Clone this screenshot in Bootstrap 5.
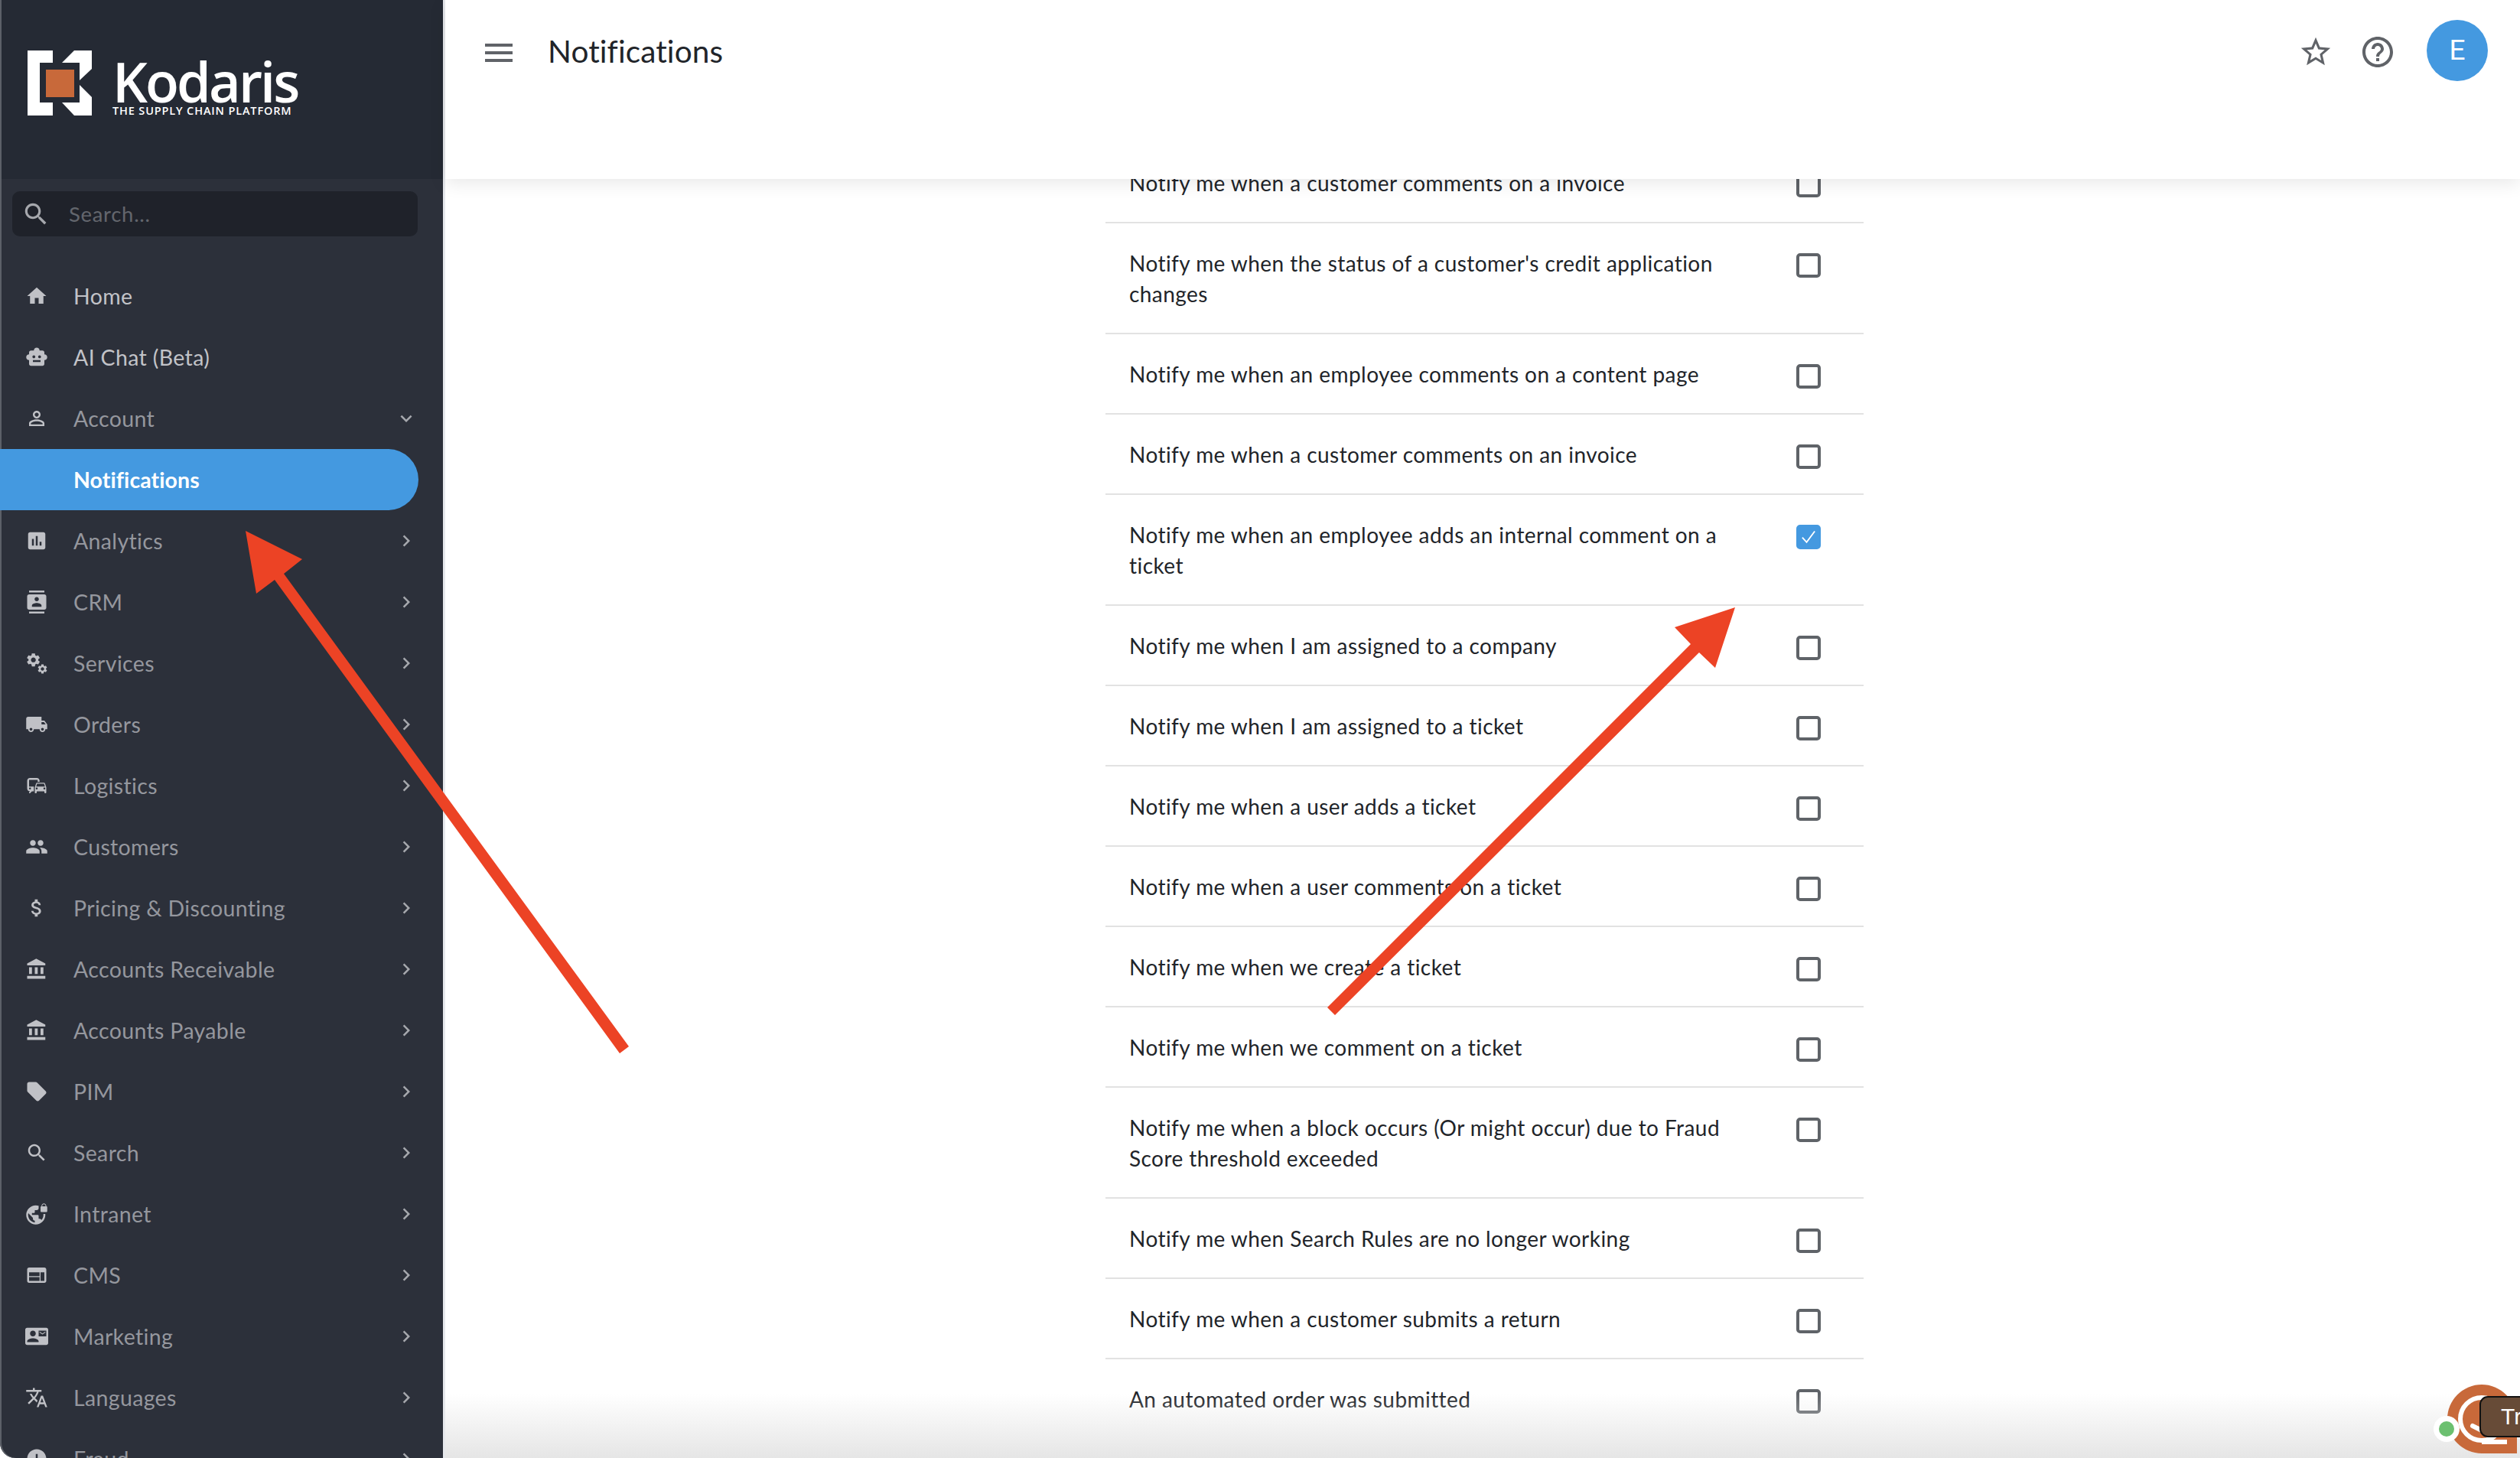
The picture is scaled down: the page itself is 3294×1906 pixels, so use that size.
<!DOCTYPE html>
<html lang="en">
<head>
<meta charset="utf-8">
<title>Notifications</title>
<link href="https://cdn.jsdelivr.net/npm/bootstrap@5.3.0/dist/css/bootstrap.min.css" rel="stylesheet">
<style>
html,body{height:100%;margin:0;overflow:hidden;background:#2a2622}
body{font-family:"Lato","Liberation Sans",sans-serif;color:#212429}
.kd-app{height:1906px;width:3294px;position:relative;overflow:hidden;background:#fff}
.kd-side{width:582px;flex:none;background:#2c303a;box-shadow:inset 2px 0 #5c6068;border-right:3px solid #e6e8ec;border-bottom-left-radius:20px;overflow:hidden}
.kd-brand{height:234px;flex:none;background:#252a34;box-shadow:inset 2px 0 #5c6068;padding-left:36px}
.kd-mark{width:84px;height:85px;flex:none;margin-top:-17px}
.kd-word{margin-left:27px;color:#fff;font-family:"Open Sans",sans-serif;line-height:1;margin-top:-6px}
.kd-word-main{font-size:72px;font-weight:600;letter-spacing:-2.9px;height:62px;line-height:62px}
.kd-word-sub{font-size:14.5px;font-weight:600;letter-spacing:.85px;white-space:nowrap;margin-top:1px}
.kd-search-wrap{padding:16px 33px 0 16px;flex:none}
.kd-search{height:59px;background:#1f222a;border-radius:10px;padding-left:16px}
.kd-search svg{width:38px;height:38px;fill:#a6a8ad;flex:none;margin-left:-4px}
.kd-search input{background:transparent;border:0;box-shadow:none;padding:0 0 0 24px;font-size:27.5px;letter-spacing:.7px;color:#ccc}
.kd-search input:focus{background:transparent;box-shadow:none}
.kd-search input::placeholder{color:#63666d;opacity:1}
.kd-nav{padding-top:38px;flex-wrap:nowrap;flex:none}
.kd-item{height:80px;flex:none;padding:0 33px 0 33px;font-size:28.5px;letter-spacing:.35px;color:#95979e;white-space:nowrap}
.kd-item:hover{color:#95979e}
.kd-ic{width:30px;height:30px;fill:#c0c1c6;flex:none;margin-right:33px}
.kd-chev{width:30px;height:30px;fill:#a6a8ad;flex:none;margin-left:auto}
.kd-item.kd-bright,.kd-item.kd-bright:hover{color:#c2c3c8}
.kd-item.kd-on,.kd-item.kd-on:hover{background:#4499e0;color:#fff;font-weight:700;padding-left:96px;width:547px;border-radius:0 40px 40px 0;letter-spacing:.08px}
.kd-main{min-width:0;position:relative}
.kd-top{height:234px;flex:none;background:#fff;padding:0;box-shadow:0 6px 22px rgba(0,0,0,.09);z-index:5;position:relative;align-items:flex-start}
.kd-burger{width:36px;height:24px;margin:57px 46px 0 52px;flex:none;background:linear-gradient(#606368 0 4px,transparent 4px 10px,#606368 10px 14px,transparent 14px 20px,#606368 20px 24px)}
.kd-title{font-size:40.5px;line-height:48px;letter-spacing:.12px;margin:43px 0 0;font-weight:400;color:#212429}
.kd-tools{margin-left:auto;padding-right:42px;padding-top:26px}
.kd-tool{width:46px;height:46px;fill:#606368;display:block}
.kd-star{margin-right:34px;margin-top:19px}
.kd-help{margin-right:40px;width:48px;height:48px;margin-top:18px}
.kd-avatar{width:80px;height:80px;background:#4499e0;color:#fff;font-family:Roboto,sans-serif;font-size:37px;border-radius:50%;flex:none}
.kd-scroll{overflow:hidden;flex:1 1 0;min-height:0;padding-left:5px}
.kd-list{width:991px;margin:-47px auto 0;border-radius:0}
.list-group-flush>.kd-row{padding:31.5px 56px 31.5px 31px;border-width:0 0 2px;border-style:solid;border-color:#e2e2e2;font-size:28px;line-height:40px;letter-spacing:.44px;color:#212429;gap:56px}
.kd-row-text{width:816px;flex:none}
.kd-check.form-check-input{width:32px;height:32px;margin:7px 0 0;flex:none;border:4px solid #5f6368;border-radius:5px;background-color:#fff}
.kd-check.form-check-input:checked{background-color:#4499e0;border-color:#4499e0;background-size:125%;background-position:center;background-image:url("data:image/svg+xml,%3csvg xmlns='http://www.w3.org/2000/svg' viewBox='0 0 24 24'%3e%3cpath fill='none' stroke='%23fff' stroke-width='1.5' d='M5.5 12.5l4.5 5L18.5 6'/%3e%3c/svg%3e")}
.kd-fade{position:absolute;left:582px;right:0;bottom:0;height:84px;background:linear-gradient(rgba(225,225,225,0),rgba(225,225,225,.85));pointer-events:none;z-index:6}
.kd-arrows{position:absolute;inset:0;width:3294px;height:1906px;pointer-events:none;z-index:8}
.kd-chat{position:absolute;left:3170px;top:1800px;width:124px;height:106px;z-index:7;pointer-events:none}
.kd-chat-tip{position:absolute;left:71px;top:25px;width:60px;height:54px;background:#674b37;border:2.5px solid #111;border-radius:11px 0 0 11px;color:#fff;font-family:"Liberation Sans",sans-serif;font-size:30px;line-height:50px;padding-left:26px;overflow:hidden}
</style>
</head>
<body>
<svg width="0" height="0" class="position-absolute">
<defs>
<symbol id="i-home" viewBox="0 0 24 24"><path d="M10 20v-6h4v6h5v-8h3L12 3 2 12h3v8z"/></symbol>
<symbol id="i-bot" viewBox="0 0 24 24"><path fill-rule="evenodd" d="M20 9V7c0-1.1-.9-2-2-2h-3c0-1.66-1.34-3-3-3S9 3.34 9 5H6c-1.1 0-2 .9-2 2v2c-1.66 0-3 1.34-3 3s1.34 3 3 3v4c0 1.1.9 2 2 2h12c1.1 0 2-.9 2-2v-4c1.66 0 3-1.34 3-3s-1.34-3-3-3zM7.5 11.5C7.5 10.67 8.17 10 9 10s1.5.67 1.5 1.5S9.83 13 9 13s-1.5-.67-1.5-1.5zM16 17H8v-2h8v2zm-1-4c-.83 0-1.5-.67-1.5-1.5S14.17 10 15 10s1.5.67 1.5 1.5S15.83 13 15 13z"/></symbol>
<symbol id="i-person" viewBox="0 0 24 24"><path d="M12 5.9c1.16 0 2.1.94 2.1 2.1s-.94 2.1-2.1 2.1S9.9 9.16 9.9 8s.94-2.1 2.1-2.1m0 9c2.97 0 6.1 1.46 6.1 2.1v1.1H5.9V17c0-.64 3.13-2.1 6.1-2.1M12 4C9.79 4 8 5.79 8 8s1.79 4 4 4 4-1.79 4-4-1.79-4-4-4zm0 9c-2.67 0-8 1.34-8 4v3h16v-3c0-2.66-5.33-4-8-4z"/></symbol>
<symbol id="i-chart" viewBox="0 0 24 24"><path d="M19 3H5c-1.1 0-2 .9-2 2v14c0 1.1.9 2 2 2h14c1.1 0 2-.9 2-2V5c0-1.1-.9-2-2-2zM9 17H7v-7h2v7zm4 0h-2V7h2v10zm4 0h-2v-4h2v4z"/></symbol>
<symbol id="i-crm" viewBox="0 0 24 24"><path d="M20 0H4v2h16V0zM4 24h16v-2H4v2zM20 4H4c-1.1 0-2 .9-2 2v12c0 1.1.9 2 2 2h16c1.1 0 2-.9 2-2V6c0-1.1-.9-2-2-2zm-8 2.75c1.24 0 2.25 1.01 2.25 2.25s-1.01 2.25-2.25 2.25S9.75 10.24 9.75 9 10.76 6.75 12 6.75zM17 17H7v-1.5c0-1.67 3.33-2.5 5-2.5s5 .83 5 2.5V17z"/></symbol>
<symbol id="i-gears" viewBox="0 0 24 24"><svg x="0" y="0" width="17" height="17" viewBox="0 0 24 24"><path d="M19.14 12.94c.04-.3.06-.61.06-.94 0-.32-.02-.64-.07-.94l2.03-1.58c.18-.14.23-.41.12-.61l-1.92-3.32c-.12-.22-.37-.29-.59-.22l-2.39.96c-.5-.38-1.03-.7-1.62-.94l-.36-2.54c-.04-.24-.24-.41-.48-.41h-3.84c-.24 0-.43.17-.47.41l-.36 2.54c-.59.24-1.13.57-1.62.94l-2.39-.96c-.22-.08-.47 0-.59.22L2.74 8.87c-.12.21-.08.47.12.61l2.03 1.58c-.05.3-.09.63-.09.94s.02.64.07.94l-2.03 1.58c-.18.14-.23.41-.12.61l1.92 3.32c.12.22.37.29.59.22l2.39-.96c.5.38 1.03.7 1.62.94l.36 2.54c.05.24.24.41.48.41h3.84c.24 0 .44-.17.47-.41l.36-2.54c.59-.24 1.13-.56 1.62-.94l2.39.96c.22.08.47 0 .59-.22l1.92-3.32c.12-.22.07-.47-.12-.61l-2.01-1.58zM12 15.6c-1.98 0-3.6-1.62-3.6-3.6s1.62-3.6 3.6-3.6 3.6 1.62 3.6 3.6-1.62 3.6-3.6 3.6z"/></svg><svg x="12" y="12" width="12" height="12" viewBox="0 0 24 24"><path d="M19.14 12.94c.04-.3.06-.61.06-.94 0-.32-.02-.64-.07-.94l2.03-1.58c.18-.14.23-.41.12-.61l-1.92-3.32c-.12-.22-.37-.29-.59-.22l-2.39.96c-.5-.38-1.03-.7-1.62-.94l-.36-2.54c-.04-.24-.24-.41-.48-.41h-3.84c-.24 0-.43.17-.47.41l-.36 2.54c-.59.24-1.13.57-1.62.94l-2.39-.96c-.22-.08-.47 0-.59.22L2.74 8.87c-.12.21-.08.47.12.61l2.03 1.58c-.05.3-.09.63-.09.94s.02.64.07.94l-2.03 1.58c-.18.14-.23.41-.12.61l1.92 3.32c.12.22.37.29.59.22l2.39-.96c.5.38 1.03.7 1.62.94l.36 2.54c.05.24.24.41.48.41h3.84c.24 0 .44-.17.47-.41l.36-2.54c.59-.24 1.13-.56 1.62-.94l2.39.96c.22.08.47 0 .59-.22l1.92-3.32c.12-.22.07-.47-.12-.61l-2.01-1.58zM12 15.6c-1.98 0-3.6-1.62-3.6-3.6s1.62-3.6 3.6-3.6 3.6 1.62 3.6 3.6-1.62 3.6-3.6 3.6z"/></svg></symbol>
<symbol id="i-truck" viewBox="0 0 24 24"><path d="M20 8h-3V4H3c-1.1 0-2 .9-2 2v11h2c0 1.66 1.34 3 3 3s3-1.34 3-3h6c0 1.66 1.34 3 3 3s3-1.34 3-3h2v-5l-3-4zM6 18.5c-.83 0-1.5-.67-1.5-1.5s.67-1.5 1.5-1.5 1.5.67 1.5 1.5-.67 1.5-1.5 1.5zm13.5-9l1.96 2.5H17V9.5h2.5zm-1.5 9c-.83 0-1.5-.67-1.5-1.5s.67-1.5 1.5-1.5 1.5.67 1.5 1.5-.67 1.5-1.5 1.5z"/></symbol>
<symbol id="i-commute" viewBox="0 0 24 24"><path d="M12 4H5C3.34 4 2 5.34 2 7v8c0 1.66 1.34 3 3 3l-1 1v1h1l2-2.03L9 18v-5H4V5.98L13 6v2h2V7c0-1.66-1.34-3-3-3zM5 14c.55 0 1 .45 1 1s-.45 1-1 1-1-.45-1-1 .45-1 1-1zm15.57-4.34c-.14-.4-.52-.66-.97-.66h-7.19c-.46 0-.83.26-.98.66L10 13.77l.01 5.51c0 .38.31.72.69.72h.62c.38 0 .68-.38.68-.76V18h8v1.24c0 .38.31.76.69.76h.61c.38 0 .69-.34.69-.72l.01-1.37v-4.14l-1.43-4.11zm-8.16.34h7.19l1.03 3h-9.25l1.03-3zM12 16c-.55 0-1-.45-1-1s.45-1 1-1 1 .45 1 1-.45 1-1 1zm8 0c-.55 0-1-.45-1-1s.45-1 1-1 1 .45 1 1-.45 1-1 1z"/></symbol>
<symbol id="i-people" viewBox="0 0 24 24"><path d="M16 11c1.66 0 2.99-1.34 2.99-3S17.66 5 16 5c-1.66 0-3 1.34-3 3s1.34 3 3 3zm-8 0c1.66 0 2.99-1.34 2.99-3S9.66 5 8 5C6.34 5 5 6.34 5 8s1.34 3 3 3zm0 2c-2.33 0-7 1.17-7 3.5V19h14v-2.5c0-2.33-4.67-3.5-7-3.5zm8 0c-.29 0-.62.02-.97.05 1.16.84 1.97 1.97 1.97 3.45V19h6v-2.5c0-2.33-4.67-3.5-7-3.5z"/></symbol>
<symbol id="i-money" viewBox="0 0 24 24"><path d="M11.8 10.9c-2.27-.59-3-1.2-3-2.15 0-1.09 1.01-1.85 2.7-1.85 1.78 0 2.44.85 2.5 2.1h2.21c-.07-1.72-1.12-3.3-3.21-3.81V3h-3v2.16c-1.94.42-3.5 1.68-3.5 3.61 0 2.31 1.91 3.46 4.7 4.13 2.5.6 3 1.48 3 2.41 0 .69-.49 1.79-2.7 1.79-2.06 0-2.87-.92-2.98-2.1h-2.2c.12 2.19 1.76 3.42 3.68 3.83V21h3v-2.15c1.95-.37 3.5-1.5 3.5-3.55 0-2.84-2.43-3.81-4.7-4.4z"/></symbol>
<symbol id="i-bank" viewBox="0 0 24 24"><path d="M4 10v7h3v-7H4zm6 0v7h3v-7h-3zM2 22h19v-3H2v3zm14-12v7h3v-7h-3zm-4.5-9L2 6v2h19V6l-9.5-5z"/></symbol>
<symbol id="i-tag" viewBox="0 0 24 24"><path d="M21.41 11.58l-9-9C12.05 2.22 11.55 2 11 2H4c-1.1 0-2 .9-2 2v7c0 .55.22 1.05.59 1.42l9 9c.36.36.86.58 1.41.58.55 0 1.05-.22 1.41-.59l7-7c.37-.36.59-.86.59-1.41 0-.55-.23-1.06-.59-1.42z"/></symbol>
<symbol id="i-search" viewBox="0 0 24 24"><path d="M15.5 14h-.79l-.28-.27C15.41 12.59 16 11.11 16 9.5 16 5.91 13.09 3 9.5 3S3 5.91 3 9.5 5.91 16 9.5 16c1.61 0 3.09-.59 4.23-1.57l.27.28v.79l5 4.99L20.49 19l-4.99-5zm-6 0C7.01 14 5 11.99 5 9.5S7.01 5 9.5 5 14 7.01 14 9.5 11.99 14 9.5 14z"/></symbol>
<symbol id="i-vpn" viewBox="0 0 24 24"><path d="M22 4v-.5C22 2.12 20.88 1 19.5 1S17 2.12 17 3.5V4c-.55 0-1 .45-1 1v4c0 .55.45 1 1 1h5c.55 0 1-.45 1-1V5c0-.55-.45-1-1-1zm-.8 0h-3.4v-.5c0-.94.76-1.7 1.7-1.7s1.7.76 1.7 1.7V4zm-2.28 8c.04.33.08.66.08 1 0 2.08-.8 3.97-2.1 5.39-.26-.81-1-1.39-1.9-1.39h-1v-3c0-.55-.45-1-1-1H7v-2h2c.55 0 1-.45 1-1V8h2c1.1 0 2-.9 2-2V3.46c-.95-.3-1.95-.46-3-.46C5.48 3 1 7.48 1 13s4.48 10 10 10 10-4.48 10-10c0-.34-.02-.67-.05-1h-2.03zM10 20.93c-3.95-.49-7-3.85-7-7.93 0-.62.08-1.21.21-1.79L8 16v1c0 1.1.9 2 2 2v1.93z"/></symbol>
<symbol id="i-web" viewBox="0 0 24 24"><path d="M20 4H4c-1.1 0-1.99.9-1.99 2L2 18c0 1.1.9 2 2 2h16c1.1 0 2-.9 2-2V6c0-1.1-.9-2-2-2zm-5 14H4v-4h11v4zm0-5H4V9h11v4zm5 5h-4V9h4v9z"/></symbol>
<symbol id="i-mail" viewBox="0 0 24 24"><path d="M21 8V7l-3 2-3-2v1l3 2 3-2zm1-5H2C.9 3 0 3.9 0 5v14c0 1.1.9 2 2 2h20c1.1 0 1.99-.9 1.99-2L24 5c0-1.1-.9-2-2-2zM8 6c1.66 0 3 1.34 3 3s-1.34 3-3 3-3-1.34-3-3 1.34-3 3-3zm6 12H2v-1c0-2 4-3.1 6-3.1s6 1.1 6 3.1v1zm8-6h-8V6h8v6z"/></symbol>
<symbol id="i-lang" viewBox="0 0 24 24"><path d="M12.87 15.07l-2.54-2.51.03-.03c1.74-1.94 2.98-4.17 3.71-6.53H17V4h-7V2H8v2H1v1.99h11.17C11.5 7.92 10.44 9.75 9 11.35 8.07 10.32 7.3 9.19 6.69 8h-2c.73 1.63 1.73 3.17 2.98 4.56l-5.09 5.02L4 19l5-5 3.11 3.11.76-2.04zM18.5 10h-2L12 22h2l1.12-3h4.75L21 22h2l-4.5-12zm-2.62 7l1.62-4.33L19.12 17h-3.24z"/></symbol>
<symbol id="i-alert" viewBox="0 0 24 24"><path d="M12 2C6.48 2 2 6.48 2 12s4.48 10 10 10 10-4.48 10-10S17.52 2 12 2zm1 15h-2v-2h2v2zm0-4h-2V7h2v6z"/></symbol>
<symbol id="i-right" viewBox="0 0 24 24"><path d="M8.59 16.59L13.17 12 8.59 7.41 10 6l6 6-6 6z"/></symbol>
<symbol id="i-down" viewBox="0 0 24 24"><path d="M16.59 8.59L12 13.17 7.41 8.59 6 10l6 6 6-6z"/></symbol>
</defs>
</svg>

<div class="kd-app d-flex">
  <aside class="kd-side d-flex flex-column">
    <div class="kd-brand d-flex align-items-center">
      <svg class="kd-mark" viewBox="36 66 84 85">
        <path fill="#fff" d="M36 66h33v16H52v52h17v17H36z"/>
        <path fill="#fff" d="M81 82l16-16h23v24l-16 15V82z"/>
        <path fill="#fff" d="M104 111l16 16v24H97l-16-17h23z"/>
        <rect x="60" y="91" width="37" height="36" fill="#c8693a"/>
      </svg>
      <div class="kd-word">
        <div class="kd-word-main">Kodaris</div>
        <div class="kd-word-sub">THE SUPPLY CHAIN PLATFORM</div>
      </div>
    </div>
    <div class="kd-search-wrap">
      <div class="kd-search d-flex align-items-center">
        <svg viewBox="0 0 24 24"><use href="#i-search"/></svg>
        <input class="form-control" type="text" placeholder="Search..." aria-label="Search">
      </div>
    </div>
    <nav class="nav flex-column kd-nav">
      <a class="nav-link kd-item kd-bright d-flex align-items-center" href="#"><svg class="kd-ic"><use href="#i-home"/></svg>Home</a>
      <a class="nav-link kd-item kd-bright d-flex align-items-center" href="#"><svg class="kd-ic"><use href="#i-bot"/></svg>AI Chat (Beta)</a>
      <a class="nav-link kd-item d-flex align-items-center" href="#"><svg class="kd-ic"><use href="#i-person"/></svg>Account<svg class="kd-chev"><use href="#i-down"/></svg></a>
      <a class="nav-link kd-item kd-on d-flex align-items-center" href="#">Notifications</a>
      <a class="nav-link kd-item d-flex align-items-center" href="#"><svg class="kd-ic"><use href="#i-chart"/></svg>Analytics<svg class="kd-chev"><use href="#i-right"/></svg></a>
      <a class="nav-link kd-item d-flex align-items-center" href="#"><svg class="kd-ic"><use href="#i-crm"/></svg>CRM<svg class="kd-chev"><use href="#i-right"/></svg></a>
      <a class="nav-link kd-item d-flex align-items-center" href="#"><svg class="kd-ic"><use href="#i-gears"/></svg>Services<svg class="kd-chev"><use href="#i-right"/></svg></a>
      <a class="nav-link kd-item d-flex align-items-center" href="#"><svg class="kd-ic"><use href="#i-truck"/></svg>Orders<svg class="kd-chev"><use href="#i-right"/></svg></a>
      <a class="nav-link kd-item d-flex align-items-center" href="#"><svg class="kd-ic"><use href="#i-commute"/></svg>Logistics<svg class="kd-chev"><use href="#i-right"/></svg></a>
      <a class="nav-link kd-item d-flex align-items-center" href="#"><svg class="kd-ic"><use href="#i-people"/></svg>Customers<svg class="kd-chev"><use href="#i-right"/></svg></a>
      <a class="nav-link kd-item d-flex align-items-center" href="#"><svg class="kd-ic"><use href="#i-money"/></svg>Pricing &amp; Discounting<svg class="kd-chev"><use href="#i-right"/></svg></a>
      <a class="nav-link kd-item d-flex align-items-center" href="#"><svg class="kd-ic"><use href="#i-bank"/></svg>Accounts Receivable<svg class="kd-chev"><use href="#i-right"/></svg></a>
      <a class="nav-link kd-item d-flex align-items-center" href="#"><svg class="kd-ic"><use href="#i-bank"/></svg>Accounts Payable<svg class="kd-chev"><use href="#i-right"/></svg></a>
      <a class="nav-link kd-item d-flex align-items-center" href="#"><svg class="kd-ic"><use href="#i-tag"/></svg>PIM<svg class="kd-chev"><use href="#i-right"/></svg></a>
      <a class="nav-link kd-item d-flex align-items-center" href="#"><svg class="kd-ic"><use href="#i-search"/></svg>Search<svg class="kd-chev"><use href="#i-right"/></svg></a>
      <a class="nav-link kd-item d-flex align-items-center" href="#"><svg class="kd-ic"><use href="#i-vpn"/></svg>Intranet<svg class="kd-chev"><use href="#i-right"/></svg></a>
      <a class="nav-link kd-item d-flex align-items-center" href="#"><svg class="kd-ic"><use href="#i-web"/></svg>CMS<svg class="kd-chev"><use href="#i-right"/></svg></a>
      <a class="nav-link kd-item d-flex align-items-center" href="#"><svg class="kd-ic"><use href="#i-mail"/></svg>Marketing<svg class="kd-chev"><use href="#i-right"/></svg></a>
      <a class="nav-link kd-item d-flex align-items-center" href="#"><svg class="kd-ic"><use href="#i-lang"/></svg>Languages<svg class="kd-chev"><use href="#i-right"/></svg></a>
      <a class="nav-link kd-item d-flex align-items-center" href="#"><svg class="kd-ic"><use href="#i-alert"/></svg>Fraud<svg class="kd-chev"><use href="#i-right"/></svg></a>
    </nav>
  </aside>

  <main class="kd-main flex-grow-1 d-flex flex-column">
    <header class="navbar kd-top flex-nowrap">
      <div class="kd-burger"></div>
      <h1 class="kd-title">Notifications</h1>
      <div class="kd-tools d-flex align-items-start">
        <svg class="kd-tool kd-star" viewBox="0 0 24 24"><path d="M22 9.24l-7.19-.62L12 2 9.19 8.63 2 9.24l5.46 4.73L5.82 21 12 17.27 18.18 21l-1.63-7.03L22 9.24zM12 15.4l-3.76 2.27 1-4.28-3.32-2.88 4.38-.38L12 6.1l1.71 4.04 4.38.38-3.32 2.88 1 4.28L12 15.4z"/></svg>
        <svg class="kd-tool kd-help" viewBox="0 0 24 24"><path d="M11 18h2v-2h-2v2zm1-16C6.48 2 2 6.48 2 12s4.48 10 10 10 10-4.48 10-10S17.52 2 12 2zm0 18c-4.41 0-8-3.59-8-8s3.59-8 8-8 8 3.59 8 8-3.59 8-8 8zm0-14c-2.21 0-4 1.79-4 4h2c0-1.1.9-2 2-2s2 .9 2 2c0 2-3 1.75-3 5h2c0-2.25 3-2.5 3-5 0-2.21-1.79-4-4-4z"/></svg>
        <div class="kd-avatar d-flex align-items-center justify-content-center">E</div>
      </div>
    </header>
    <div class="kd-scroll">
      <div class="list-group list-group-flush kd-list">
        <div class="list-group-item kd-row d-flex align-items-start"><div class="kd-row-text">Notify me when a customer comments on a invoice</div><input class="form-check-input kd-check" type="checkbox" aria-label="toggle"></div>
        <div class="list-group-item kd-row d-flex align-items-start"><div class="kd-row-text">Notify me when the status of a customer's credit application changes</div><input class="form-check-input kd-check" type="checkbox" aria-label="toggle"></div>
        <div class="list-group-item kd-row d-flex align-items-start"><div class="kd-row-text">Notify me when an employee comments on a content page</div><input class="form-check-input kd-check" type="checkbox" aria-label="toggle"></div>
        <div class="list-group-item kd-row d-flex align-items-start"><div class="kd-row-text">Notify me when a customer comments on an invoice</div><input class="form-check-input kd-check" type="checkbox" aria-label="toggle"></div>
        <div class="list-group-item kd-row d-flex align-items-start"><div class="kd-row-text">Notify me when an employee adds an internal comment on a ticket</div><input class="form-check-input kd-check" type="checkbox" checked aria-label="toggle"></div>
        <div class="list-group-item kd-row d-flex align-items-start"><div class="kd-row-text">Notify me when I am assigned to a company</div><input class="form-check-input kd-check" type="checkbox" aria-label="toggle"></div>
        <div class="list-group-item kd-row d-flex align-items-start"><div class="kd-row-text">Notify me when I am assigned to a ticket</div><input class="form-check-input kd-check" type="checkbox" aria-label="toggle"></div>
        <div class="list-group-item kd-row d-flex align-items-start"><div class="kd-row-text">Notify me when a user adds a ticket</div><input class="form-check-input kd-check" type="checkbox" aria-label="toggle"></div>
        <div class="list-group-item kd-row d-flex align-items-start"><div class="kd-row-text">Notify me when a user comments on a ticket</div><input class="form-check-input kd-check" type="checkbox" aria-label="toggle"></div>
        <div class="list-group-item kd-row d-flex align-items-start"><div class="kd-row-text">Notify me when we create a ticket</div><input class="form-check-input kd-check" type="checkbox" aria-label="toggle"></div>
        <div class="list-group-item kd-row d-flex align-items-start"><div class="kd-row-text">Notify me when we comment on a ticket</div><input class="form-check-input kd-check" type="checkbox" aria-label="toggle"></div>
        <div class="list-group-item kd-row d-flex align-items-start"><div class="kd-row-text">Notify me when a block occurs (Or might occur) due to Fraud Score threshold exceeded</div><input class="form-check-input kd-check" type="checkbox" aria-label="toggle"></div>
        <div class="list-group-item kd-row d-flex align-items-start"><div class="kd-row-text">Notify me when Search Rules are no longer working</div><input class="form-check-input kd-check" type="checkbox" aria-label="toggle"></div>
        <div class="list-group-item kd-row d-flex align-items-start"><div class="kd-row-text">Notify me when a customer submits a return</div><input class="form-check-input kd-check" type="checkbox" aria-label="toggle"></div>
        <div class="list-group-item kd-row d-flex align-items-start"><div class="kd-row-text">An automated order was submitted</div><input class="form-check-input kd-check" type="checkbox" aria-label="toggle"></div>
      </div>
    </div>
  </main>

  <div class="kd-fade"></div>

  <div class="kd-chat">
    <svg class="position-absolute top-0 start-0" width="124" height="106" viewBox="3170 1800 124 106">
      <circle cx="3244" cy="1855" r="45" fill="#c8693a"/>
      <rect x="3244" y="1855" width="46" height="45" fill="#c8693a"/>
      <circle cx="3244" cy="1855" r="28" fill="none" stroke="#fff" stroke-width="6"/>
      <path d="M3244 1882h33v6h-33z" fill="#fff"/>
      <path d="M3232 1864l12 6" stroke="#fff" stroke-width="6" stroke-linecap="round"/>
      <circle cx="3198" cy="1868" r="17" fill="#fff"/>
      <circle cx="3198" cy="1868" r="10" fill="#6cc070"/>
    </svg>
    <div class="kd-chat-tip">Tr</div>
  </div>

  <svg class="kd-arrows" viewBox="0 0 3294 1906">
    <polygon fill="#ec4325" points="321,694 395,731 371,750 822,1368 810,1377 359,758 335,776"/>
    <polygon fill="#ec4325" points="2268,794 2242,873 2221,853 1745,1327 1735,1317 2210,842 2189,820"/>
  </svg>
</div>
<script src="https://cdn.jsdelivr.net/npm/bootstrap@5.3.0/dist/js/bootstrap.bundle.min.js"></script>
</body>
</html>
